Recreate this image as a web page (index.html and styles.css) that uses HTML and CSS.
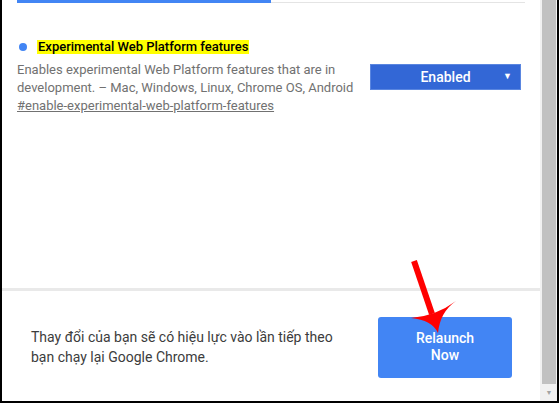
FILE: index.html
```html
<!DOCTYPE html>
<html>
<head>
<meta charset="utf-8">
<link rel="stylesheet" href="styles.css">
</head>
<body>
<div class="frame">
  <div class="main">
    <div class="top">
      <div class="tabs">
        <div class="tab-active"></div>
        <div class="tab-line"></div>
      </div>
      <div class="flag">
        <div class="flag-text">
          <div class="flag-title"><span class="dot"></span><span class="hl">Experimental Web Platform features</span></div>
          <div class="flag-desc">Enables experimental Web Platform features that are in<br>development. – Mac, Windows, Linux, Chrome OS, Android</div>
          <div class="flag-link">#enable-experimental-web-platform-features</div>
        </div>
        <div class="select"><span class="select-label">Enabled</span><span class="select-arrow">▼</span></div>
      </div>
    </div>
    <div class="bottom">
      <div class="notice">Thay đổi của bạn sẽ có hiệu lực vào lần tiếp theo<br>bạn chạy lại Google Chrome.</div>
      <div class="relaunch">Relaunch<br>Now</div>
    </div>
  </div>
  <div class="scrollbar">
    <div class="thumb"></div>
    <div class="down">▼</div>
  </div>
  <svg class="arrow" width="559" height="403" viewBox="0 0 559 403">
    <line x1="414" y1="261" x2="432" y2="314" stroke="#ff0000" stroke-width="6"/>
    <path d="M411,318 Q436,316 456,301 Q440,312 438,333 Q432,320 411,318 Z" fill="#ff0000"/>
  </svg>
</div>
</body>
</html>
```
FILE: styles.css
```css
html, body {
  margin: 0;
  padding: 0;
  background: #fff;
  overflow: hidden;
}
.frame {
  position: relative;
  width: 559px;
  height: 403px;
  box-sizing: border-box;
  border-left: 2px solid #000;
  border-right: 2px solid #000;
  border-bottom: 2px solid #000;
  display: flex;
  font-family: Roboto, "Noto Sans", sans-serif;
}
.main {
  flex: 1;
  display: flex;
  flex-direction: column;
  background: #fff;
}
.top {
  height: 288px;
  display: flex;
  flex-direction: column;
}
.tabs {
  display: flex;
  align-items: flex-start;
  padding-left: 15px;
  height: 3px;
}
.tab-active {
  width: 254px;
  height: 3px;
  background: #4285f4;
}
.tab-line {
  width: 254px;
  height: 1px;
  margin-top: 2px;
  background: #e4e4e4;
}
.flag {
  display: flex;
  justify-content: space-between;
  padding: 37px 19px 0 15px;
}
.flag-title {
  display: flex;
  align-items: center;
  font-size: 13px;
  line-height: 14px;
  color: #000;
  height: 14px;
}
.dot {
  width: 8px;
  height: 8px;
  border-radius: 50%;
  background: #4285f4;
  margin-left: 2px;
  margin-right: 10px;
}
.hl {
  background: #ffff00;
  padding: 0 1px;
  font-weight: 500;
}
.flag-desc {
  margin-top: 7px;
  font-size: 13px;
  line-height: 18px;
  color: #717171;
}
.flag-link {
  font-size: 13px;
  line-height: 18px;
  color: #717171;
  text-decoration: underline;
}
.select {
  margin-top: 24px;
  width: 151px;
  height: 26px;
  box-sizing: border-box;
  background: #3367d6;
  border: 1px solid #5a86e0;
  position: relative;
  display: flex;
  align-items: center;
  justify-content: center;
  color: #fff;
  font-size: 14px;
}
.select-label {
  font-weight: 500;
}
.select-arrow {
  position: absolute;
  right: 8px;
  top: 6px;
  font-size: 9px;
}
.bottom {
  flex: 1;
  border-top: 3px solid #e9e9e9;
  display: flex;
  align-items: center;
  justify-content: space-between;
  padding: 0 28px 0 29px;
}
.notice {
  font-size: 14px;
  line-height: 20px;
  color: #3c3c3c;
  margin-top: 1px;
}
.relaunch {
  width: 134px;
  height: 61px;
  box-sizing: border-box;
  background: #4285f4;
  border-radius: 3px;
  color: #fff;
  font-size: 14px;
  font-weight: 500;
  line-height: 17px;
  display: flex;
  align-items: center;
  justify-content: center;
  text-align: center;
  margin-top: 2px;
}
.scrollbar {
  width: 17px;
  background: #f1f1f1;
  display: flex;
  flex-direction: column;
}
.thumb {
  height: 384px;
  margin: 0 1px 0 2px;
  background: #c1c1c1;
}
.down {
  flex: 1;
  display: flex;
  align-items: center;
  justify-content: center;
  color: #a3a3a3;
  font-size: 7px;
  padding-left: 1px;
}
.arrow {
  position: absolute;
  left: -2px;
  top: 0;
  pointer-events: none;
}
```
